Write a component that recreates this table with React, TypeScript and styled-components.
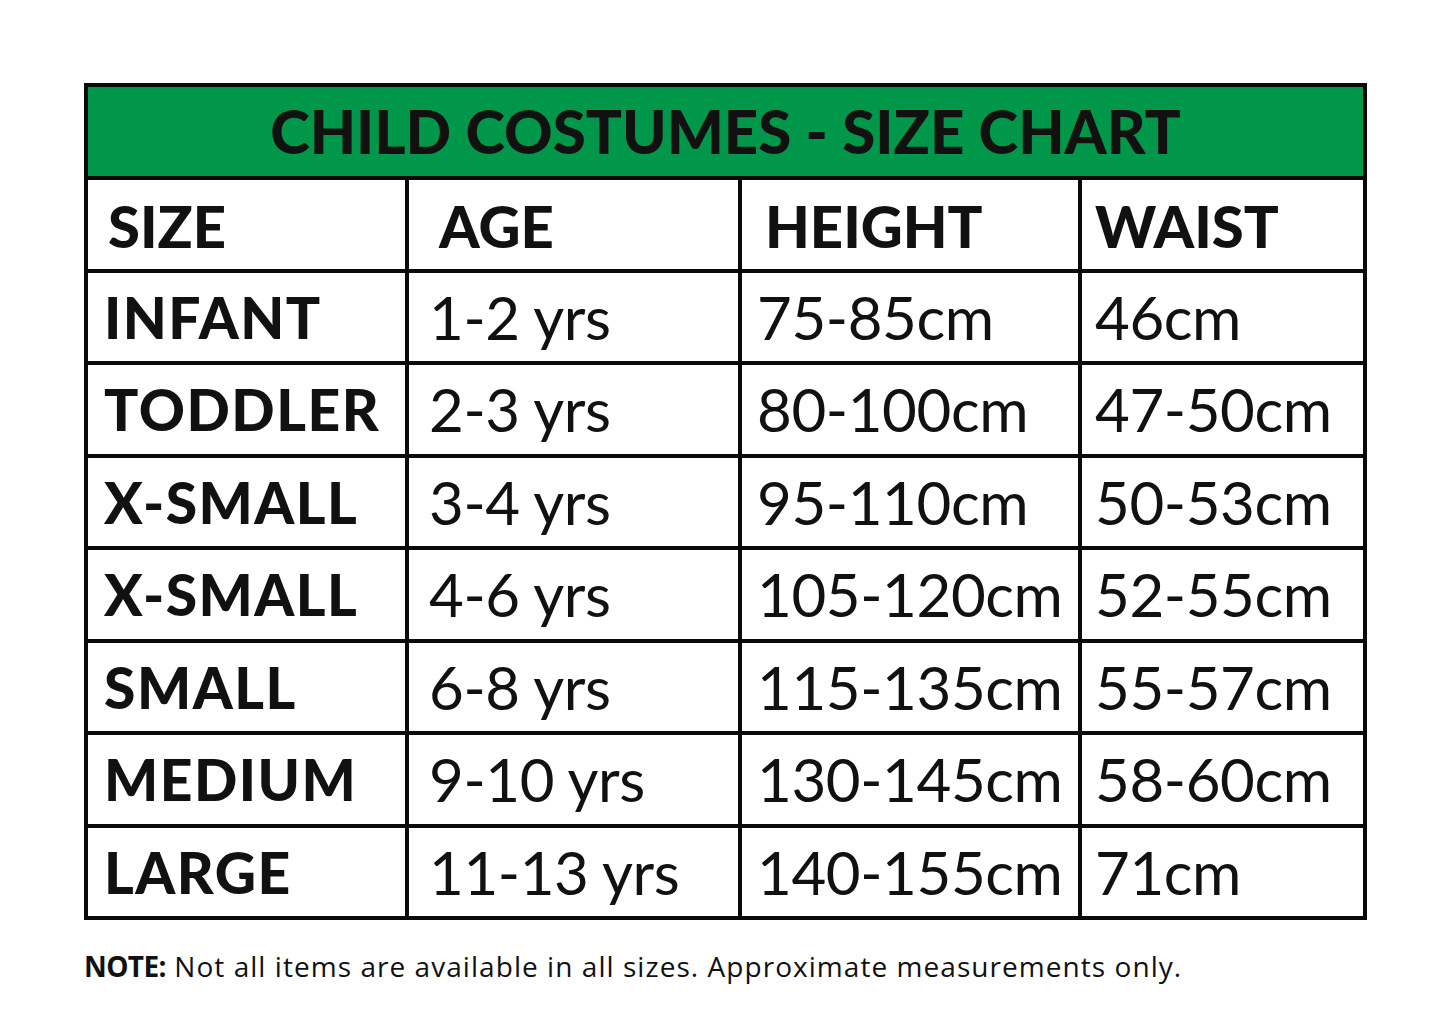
import React from "react";
import styled, { createGlobalStyle } from "styled-components";

const GlobalStyle = createGlobalStyle`
  html, body {
    margin: 0;
    padding: 0;
    background: #ffffff;
  }
`;

const Page = styled.div`
  width: 1445px;
  height: 1035px;
  padding: 83px 0 0 84px;
  box-sizing: border-box;
  font-family: "Lato", "Liberation Sans", sans-serif;
  color: #111111;
`;

const Chart = styled.div`
  width: 1283px;
  display: grid;
  grid-template-columns: 317px 329px 336px 281px;
  grid-template-rows: 89px repeat(8, 88.5px);
  gap: 4px;
  padding: 4px;
  box-sizing: border-box;
  background: #0a0a0a;
`;

const Title = styled.div`
  grid-column: 1 / -1;
  background: #00974a;
  display: flex;
  align-items: center;
  justify-content: center;
  font-weight: 900;
  font-size: 60px;
  padding-bottom: 2px;
`;

const Cell = styled.div<{ $pad: number; $bold?: boolean; $head?: boolean }>`
  background: #ffffff;
  display: flex;
  align-items: center;
  padding-left: ${(p) => p.$pad}px;
  padding-top: ${(p) => (p.$head ? 2 : 0)}px;
  box-sizing: border-box;
  white-space: nowrap;
  font-weight: ${(p) => (p.$bold ? 900 : 400)};
  font-size: ${(p) => (p.$head ? 58 : p.$bold ? 57 : 60)}px;
  letter-spacing: ${(p) => (p.$bold && !p.$head ? 1.5 : p.$bold ? 0 : -0.4)}px;
`;

const Note = styled.p`
  margin: 27px 0 0 0;
  font-family: "Open Sans", "Liberation Sans", sans-serif;
  font-size: 28px;
  letter-spacing: 1.05px;
  color: #111111;

  b {
    font-weight: 700;
    letter-spacing: -0.6px;
  }
`;

const headers = [
  { text: "SIZE", pad: 20 },
  { text: "AGE", pad: 30 },
  { text: "HEIGHT", pad: 23 },
  { text: "WAIST", pad: 13 },
];

const rows = [
  ["INFANT", "1-2 yrs", "75-85cm", "46cm"],
  ["TODDLER", "2-3 yrs", "80-100cm", "47-50cm"],
  ["X-SMALL", "3-4 yrs", "95-110cm", "50-53cm"],
  ["X-SMALL", "4-6 yrs", "105-120cm", "52-55cm"],
  ["SMALL", "6-8 yrs", "115-135cm", "55-57cm"],
  ["MEDIUM", "9-10 yrs", "130-145cm", "58-60cm"],
  ["LARGE", "11-13 yrs", "140-155cm", "71cm"],
];

const valuePads = [16, 20, 15, 13];

export default function App() {
  return (
    <>
      <GlobalStyle />
      <Page>
        <Chart>
          <Title>CHILD COSTUMES - SIZE CHART</Title>
          {headers.map((h) => (
            <Cell key={h.text} $pad={h.pad} $bold $head>
              {h.text}
            </Cell>
          ))}
          {rows.map((row, i) =>
            row.map((value, j) => (
              <Cell key={`${i}-${j}`} $pad={valuePads[j]} $bold={j === 0}>
                {value}
              </Cell>
            ))
          )}
        </Chart>
        <Note>
          <b>NOTE:</b> Not all items are available in all sizes. Approximate
          measurements only.
        </Note>
      </Page>
    </>
  );
}
